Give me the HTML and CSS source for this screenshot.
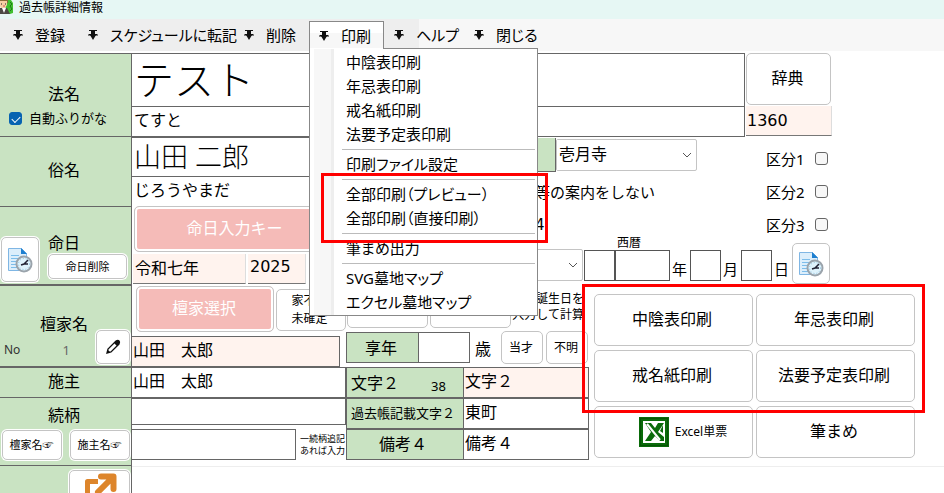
FILE: index.html
```html
<!DOCTYPE html>
<html lang="ja">
<head>
<meta charset="utf-8">
<title>過去帳詳細情報</title>
<link rel="stylesheet" href="styles.css">
</head>
<body>
<svg class="defs" aria-hidden="true">
  <symbol id="chev" viewBox="0 0 10 12"><path d="M1 1h8v1H7v2h2v2H8L5 11 2 6H1V4h2V2H1z" fill="#111"/><path d="M0 6h4M6 6h4" stroke="#111"/><path d="M1 4.500h2M7 4.500h2" stroke="#eee"/></symbol>
  <symbol id="clockdoc" viewBox="0 0 26 26">
    <path d="M1.500 1.500h13l5 5v17h-18z" fill="#dceefb" stroke="#7fb6e4"/>
    <path d="M14 1v6h6z" fill="#1d7fd0"/>
    <path d="M4 8.500h8M4 11.500h7M4 14.500h5M4 17.500h5M4 20.500h6" stroke="#7dbdea"/>
    <circle cx="17" cy="17" r="7.500" fill="#dff3fc" stroke="#9aa3ab" stroke-width="2"/>
    <circle cx="17" cy="17" r="5.500" fill="none" stroke="#8fc0dc" stroke-dasharray="1 2"/>
    <path d="M14 18l3-1 4-4M17 17h4" fill="none" stroke="#223" stroke-width="1.500"/>
  </symbol>
  <symbol id="down" viewBox="0 0 10 6"><path d="M1 1l4 4 4-4" fill="none" stroke="#555" stroke-width="1"/></symbol>
</svg>

<header class="titlebar">
  <svg class="appicon" viewBox="0 0 14 16" aria-hidden="true">
    <path d="M5 0h6l2 3v10l-3 1H6z" fill="#3fbf2f"/><path d="M10 2l2 2-2 2 2 3-2 2" fill="none" stroke="#1c7b1a"/>
    <path d="M0 0h8v3H0z" fill="#8a6a3a"/><path d="M0 1h7v4l-2 3H1L0 6z" fill="#f6cfa4"/>
    <path d="M0 8h7l3 6H0z" fill="#4d4a45"/><path d="M2 8h4l-2 5z" fill="#fff"/><path d="M1 4h1M5 4h1" stroke="#222"/><path d="M3 6h2" stroke="#c55"/>
  </svg>
  <span>過去帳詳細情報</span>
</header>

<nav class="menubar">
  <div class="menus-on">
    <button class="menu"><svg><use href="#chev"/></svg>登録</button>
    <button class="menu"><svg><use href="#chev"/></svg>スケジュールに転記</button>
    <button class="menu"><svg><use href="#chev"/></svg>削除</button>
    <div class="open-menu">
      <button class="menu tab"><svg><use href="#chev"/></svg>印刷</button>
      <div class="dropdown">
        <button>中陰表印刷</button>
        <button>年忌表印刷</button>
        <button>戒名紙印刷</button>
        <button>法要予定表印刷</button>
        <hr>
        <button>印刷ファイル設定</button>
        <hr>
        <button>全部印刷（プレビュー）</button>
        <button>全部印刷（直接印刷）</button>
        <hr>
        <button>筆まめ出力</button>
        <hr>
        <button>SVG墓地マップ</button>
        <button>エクセル墓地マップ</button>
        <div class="mark mark-menu"></div>
      </div>
    </div>
    <button class="menu help"><svg><use href="#chev"/></svg>ヘルプ</button>
  </div>
  <button class="menu close"><svg><use href="#chev"/></svg>閉じる</button>
</nav>

<main class="main">
  <aside class="side">
    <section class="cell c-homyo">
      <label for="homyo">法名</label>
      <label class="auto"><input type="checkbox" checked>自動ふりがな</label>
    </section>
    <section class="cell c-zoku"><label for="zoku">俗名</label></section>
    <section class="cell c-mei">
      <button class="btn icon" aria-label="命日履歴"><svg class="doc"><use href="#clockdoc"/></svg></button>
      <div class="stack"><label for="nen">命日</label><button class="btn small">命日削除</button></div>
    </section>
    <section class="cell c-danka">
      <label for="danka">檀家名</label>
      <div class="no-row"><span>No</span><span class="num">1</span>
        <button class="btn pen" aria-label="編集"><svg viewBox="0 0 16 16"><path d="M2 14l1-4 8-8q2-1 3 0t0 3l-8 8z" fill="#fff" stroke="#111" stroke-width="1.3"/><path d="M9 4l3 3 2-2q1-2 0-3t-3 0zM2 14l1-3 2 2z" fill="#111"/></svg></button>
      </div>
    </section>
    <section class="cell c-sesyu"><label for="sesyu">施主</label></section>
    <section class="cell c-tsuzuki">
      <label for="tsuzuki">続柄</label>
      <div class="pair"><button class="btn small">檀家名☞</button><button class="btn small">施主名☞</button></div>
    </section>
    <section class="cell c-out">
      <button class="btn out" aria-label="外部へ出力"><svg viewBox="0 0 34 34"><path d="M15 8.500H4.500V32H27V20" fill="none" stroke="#dd852b" stroke-width="5" stroke-linejoin="round"/><path d="M18 3.500h12.500V16M30 4L15 19" fill="none" stroke="#dd852b" stroke-width="6" stroke-linejoin="round" stroke-linecap="round"/></svg></button>
    </section>
  </aside>

  <div class="content">
    <div class="sec-a">
      <div class="names">
        <input id="homyo" class="f homyo" value="テスト">
        <input class="f homyo-kana" aria-label="法名ふりがな" value="てすと">
      </div>
      <div class="dict">
        <button class="btn">辞典</button>
        <input class="peach" aria-label="番号" value="1360">
      </div>
    </div>

    <div class="sec-b">
      <div class="person">
        <input id="zoku" class="f zoku" value="山田 二郎">
        <input class="f zoku-kana" aria-label="俗名ふりがな" value="じろうやまだ">
        <button class="btn pink key">命日入力キー</button>
        <div class="era">
          <input id="nen" class="peach nen" value="令和七年"><input class="peach year" aria-label="西暦年" value="2025">
        </div>
      </div>
      <div class="detail">
        <div class="detail-top">
          <div class="temple-col">
            <div class="temple"><span class="tag"></span>
              <span class="pick"><select aria-label="寺院"><option>壱月寺</option></select><svg><use href="#down"/></svg></span></div>
            <span class="line">等の案内をしない</span>
            <span class="line digit">4</span>
          </div>
          <div class="kubun">
            <label>区分1<input type="checkbox"></label>
            <label>区分2<input type="checkbox"></label>
            <label>区分3<input type="checkbox"></label>
          </div>
        </div>
        <div class="birth">
          <span class="pick era-pick"><select aria-label="元号"><option></option></select><svg><use href="#down"/></svg></span>
          <input class="box" aria-label="和暦年">
          <span class="seireki"><label for="sy">西暦</label><input id="sy" class="box wide"></span>
          <label class="u" for="sy">年</label><input id="sm" class="box" aria-label="月">
          <label class="u" for="sm">月</label><input id="sd" class="box" aria-label="日">
          <label class="u" for="sd">日</label>
          <button class="btn icon2" aria-label="履歴"><svg class="doc"><use href="#clockdoc"/></svg></button>
        </div>
      </div>
    </div>

    <div class="sec-c">
      <div class="family">
        <div class="fam-top">
          <button class="btn pink pick-danka">檀家選択</button>
          <button class="btn unk">家不明<br>未確定</button>
          <button class="btn blank" aria-label="和暦計算"></button>
          <button class="btn blank" aria-label="西暦計算"></button>
          <span class="note">誕生日を<br>入力して計算</span>
        </div>
        <div class="fam-cols">
          <div class="fam-left">
            <input id="danka" class="g danka" value="山田　太郎">
            <input id="sesyu" class="g sesyu" value="山田　太郎">
            <input id="tsuzuki" class="g tsuzuki">
            <div class="add"><input id="add" class="g"><label for="add">一続柄追記<br>あれば入力</label></div>
          </div>
          <div class="fam-mid">
            <div class="age">
              <label class="lab" for="age">享年</label><input id="age" class="g"><span class="sai">歳</span>
              <button class="btn">当才</button><button class="btn">不明</button>
            </div>
            <div class="row"><label class="lab l1" for="m2">文字２<span>38</span></label><input id="m2" class="g p" value="文字２"></div>
            <div class="row"><label class="lab l2" for="kk">過去帳記載文字２</label><input id="kk" class="g" value="東町"></div>
            <div class="row"><label class="lab l3" for="b4">備考４</label><input id="b4" class="g" value="備考４"></div>
          </div>
        </div>
      </div>
      <div class="prints">
        <button class="btn">中陰表印刷</button><button class="btn">年忌表印刷</button>
        <button class="btn">戒名紙印刷</button><button class="btn">法要予定表印刷</button>
        <button class="btn excel"><svg viewBox="0 0 30 30"><path d="M0 0h30v30H0z" fill="#0a6b0a"/><path d="M1.500 1.500h27v27h-27z" fill="none" stroke="#053f05" stroke-dasharray="1 1"/><path d="M4 4h22v22H4z" fill="#fff"/><path d="M6 6h6l4 5 3-5h6l-6 9 6 5v4h-4l-5-5-4 5H6l6-9z" fill="#0a6b0a"/><path d="M8 7l13 16" stroke="#fff" stroke-width="2"/><path d="M24 8v8l-3-2z" fill="#0a6b0a"/></svg>Excel単票</button>
        <button class="btn">筆まめ</button>
        <div class="mark mark-prints"></div>
      </div>
    </div>
    <div class="foot"></div>
  </div>
</main>
</body>
</html>
```
FILE: styles.css
```css
* { box-sizing: border-box; }
html, body { height: 100%; }
body {
  margin: 0;
  overflow: hidden;
  display: flex;
  flex-direction: column;
  background: #fff;
  color: #000;
  font: 16px/20px "Noto Sans", "Noto Sans CJK JP", sans-serif;
}
button, input, select { font: inherit; color: inherit; margin: 0; border-radius: 0; }
button { background: none; border: 0; padding: 0; white-space: nowrap; }
input, select { border: 0; background: #fff; padding: 0 2px; min-width: 0; outline: 0; }
input[type="checkbox"] {
  appearance: none;
  width: 13px;
  height: 13px;
  padding: 0;
  border: 1px solid #666;
  border-radius: 3px;
  background: #f7f7f7;
}
.defs { position: absolute; width: 0; height: 0; }

.titlebar {
  flex: none;
  height: 19px;
  display: flex;
  gap: 5px;
  background: #e6f7f4;
  font-size: 12px;
  line-height: 15px;
}
.appicon { width: 14px; height: 16px; }

.menubar {
  flex: none;
  height: 32px;
  display: flex;
  background: #f7f7f7;
  font-size: 15px;
  font-feature-settings: "palt";
}
.menus-on { display: flex; background: #eee; width: 419px; padding-left: 13px; white-space: nowrap; }
.menu { display: flex; align-items: center; gap: 12px; width: 75px; flex: none; }
.menu:nth-child(2) { width: 156px; }
.menu svg { width: 10px; height: 12px; flex: none; }
.menus-on .help { width: 80px; }
.close { margin-left: 55px; }
.open-menu { position: relative; z-index: 5; width: 75px; margin-left: -10px; margin-right: 10px; padding-top: 2px; }
.tab {
  height: 28px;
  padding: 0 0 0 9px;
  border: 1px solid #888;
  border-bottom: 0;
  background: linear-gradient(#fff 40%, #f7f7f7 40%);
}
.dropdown {
  position: absolute;
  top: 29px;
  left: 0;
  width: 229px;
  padding: 1px 2px 1px 4px;
  border: 1px solid #888;
  background: linear-gradient(90deg, #fff 4px, #f7f7f7 4px 21px, #eee 21px 24px, #fff 24px);
}
.dropdown::before {
  content: "";
  position: absolute;
  top: -1px;
  left: 0;
  width: 73px;
  height: 1px;
  background: #fff;
}
.dropdown button { display: block; width: 100%; height: 24px; padding-left: 32px; text-align: left; line-height: 24px; }
.dropdown hr { margin: 3px 0 2px 28px; border: 0; height: 1px; background: #bbb; }
.mark { position: absolute; border: 3px solid #f00; pointer-events: none; }
.mark-menu { left: 11px; right: -11px; top: 124px; height: 70px; }

.main { flex: 1; display: flex; margin-top: 2px; min-height: 0; }
.side { flex: none; width: 132px; display: flex; flex-direction: column; background: #c9e3c2; border-right: 1px solid #666; }
.cell { flex: none; display: flex; flex-direction: column; align-items: center; border-top: 1px solid #666; padding-right: 3px; }
.c-homyo { height: 83px; padding-top: 30px; gap: 5px; }
.auto { align-self: flex-start; display: flex; align-items: center; gap: 7px; padding-left: 9px; font-size: 13px; line-height: 18px; white-space: nowrap; }
.auto input[type="checkbox"] {
  border-color: #0763b1;
  background: #0763b1;
  display: grid;
  place-items: center;
}
.auto input::before { content: ""; width: 7px; height: 4px; border: solid #fff; border-width: 0 0 1px 1px; rotate: -45deg; }
.c-zoku { height: 70px; padding-top: 23px; }
.c-mei { height: 78px; flex-direction: row; align-items: flex-end; gap: 9px; padding-bottom: 2px; }
.c-danka { height: 82px; border-top-width: 2px; padding-top: 28px; }
.c-sesyu { height: 31px; border-top-width: 2px; padding-top: 3px; }
.c-tsuzuki { height: 68px; padding: 7px 0 0; gap: 5px; }
.c-tsuzuki > label { padding-right: 3px; }
.c-out { flex: 1; align-items: flex-end; padding: 4px 1px 0 0; }

.btn { background: #fff; border: 1px solid #c4c4c4; border-radius: 5px; }
.side .btn { box-shadow: 0 0 0 1px #fff; }
.doc { width: 26px; height: 26px; display: block; margin: auto; }
.icon { width: 38px; height: 45px; margin-left: 1px; flex: none; }
.stack { display: flex; flex-direction: column; flex: 1; padding-bottom: 3px; }
.side .small { font-size: 11px; }
.stack .small { height: 25px; width: 79px; margin-top: 1px; }
.no-row { align-self: stretch; display: flex; align-items: center; padding-left: 4px; font-size: 12px; color: #333; }
.no-row .num { margin-left: 42px; font-size: 13px; color: #666; }
.pen { width: 34px; height: 34px; margin-left: auto; margin-right: -2px; margin-top: -4px; }
.pen svg { width: 16px; height: 16px; display: block; margin: auto; }
.no-row span { padding-top: 2px; }
.pair { display: flex; gap: 8px; }
.pair .btn { width: 60px; height: 30px; }
.out { width: 61px; height: 40px; }
.out svg { width: 34px; height: 34px; display: block; margin: 2px auto; }

.content { flex: 1; min-width: 0; display: flex; flex-direction: column; }
.sec-a { display: flex; height: 83px; }
.names { width: 613px; display: flex; flex-direction: column; }
.f { border-top: 1px solid #666; }
.names .f { border-right: 1px solid #666; }
.homyo { height: 53px; font-size: 40px; font-weight: 300; padding-bottom: 4px; }
.homyo-kana { flex: 1; padding-bottom: 4px; }
.dict { width: 87px; display: flex; flex-direction: column; padding-left: 1px; gap: 1px; }
.dict .btn { height: 53px; margin-right: 1px; padding-bottom: 2px; padding-right: 2px; }
.peach { background: #fff3ee; border-right: 1px solid #ddd; border-bottom: 1px solid #777; }
.dict .peach { height: 30px; padding-left: 1px; font-family: "DejaVu Sans", sans-serif; }

.sec-b { display: flex; height: 149px; }
.person { width: 400px; display: flex; flex-direction: column; align-items: flex-start; }
.person .f { width: 100%; }
.zoku { height: 40px; font-size: 27px; font-weight: 300; border-top-width: 2px; padding-bottom: 4px; }
.zoku-kana { height: 30px; padding-bottom: 6px; }
.pink { background: #f5bbb8; color: #fff; box-shadow: inset 0 0 0 2px #fff; }
.key { width: 203px; height: 46px; margin-left: 2px; padding-right: 2px; padding-bottom: 2px; }
.era { display: flex; gap: 2px; padding: 2px 0 0 1px; }
.era .peach { height: 30px; padding-bottom: 4px; }
.nen { width: 113px; }
.year { width: 58px; font-family: "DejaVu Sans", sans-serif; }
.detail { flex: 1; display: flex; flex-direction: column; }
.detail-top { display: flex; height: 106px; }
.temple-col { width: 234px; display: flex; flex-direction: column; }
.temple { display: flex; height: 36px; margin-bottom: 4px; align-items: center; border-top: 1px solid #666; margin-right: 21px; }
.tag { width: 24px; height: 34px; background: #c9e3c2; border-right: 1px solid #666; border-bottom: 1px solid #666; }
.pick { display: flex; align-items: center; width: 141px; height: 32px; border: 1px solid #c4c4c4; border-radius: 2px; padding-right: 4px; }
.pick select { flex: 1; appearance: none; align-self: stretch; padding-bottom: 2px; }
.pick svg { width: 10px; height: 6px; flex: none; }
.line { height: 33px; line-height: 32px; font-size: 15px; padding-left: 3px; white-space: nowrap; }
.digit { font-family: "DejaVu Sans", sans-serif; }
.kubun { padding-top: 6px; font-size: 15px; }
.kubun label { display: flex; align-items: center; height: 33px; width: 62px; justify-content: space-between; }
.birth { display: flex; align-items: flex-end; height: 39px; }
.era-pick { width: 51px; margin-right: 1px; }
.box { width: 31px; height: 31px; border: 1px solid #555; }
.wide { width: 55px; }
.seireki { display: flex; flex-direction: column; font-size: 12px; line-height: 14px; }
.seireki label { padding-left: 2px; }
.u { width: 20px; text-align: center; line-height: 24px; font-size: 15px; padding-right: 1px; }
.icon2 { width: 38px; height: 41px; margin-bottom: -3px; }

.sec-c { display: flex; gap: 5px; }
.family { width: 457px; }
.fam-top { display: flex; height: 47px; padding-left: 4px; }
.pick-danka { width: 138px; height: 46px; margin: 1px 2px 0 0; padding-right: 2px; padding-bottom: 2px; }
.unk { width: 70px; height: 42px; margin: 4px 1px 0 0; padding-right: 3px; font-size: 12px; line-height: 18px; }
.blank { width: 81px; height: 39px; margin: 4px 2px 0 0; }
.note { font-size: 12px; line-height: 16px; padding-top: 6px; margin-left: -1px; text-align: right; white-space: nowrap; width: 72px; }
.fam-cols { display: flex; }
.fam-left { width: 214px; padding-top: 4px; display: flex; flex-direction: column; }
.g { border: 1px solid #666; padding-left: 1px; }
.fam-left .g { border-left: 0; }
.danka { height: 31px; width: 208px; background: #fff3ee; padding-bottom: 6px; }
.sesyu { height: 31px; padding-bottom: 6px; }
.tsuzuki { height: 27px; }
.add { display: flex; gap: 4px; margin-top: 4px; align-items: center; font-size: 9px; line-height: 12px; white-space: nowrap; }
.add .g { width: 164px; height: 31px; }
.fam-mid { flex: none; width: 243px; }
.lab { flex: none; display: flex; align-items: center; justify-content: center; width: 117px; background: #c9e3c2; border: 1px solid #666; border-right: 0; white-space: nowrap; }
.age { display: flex; height: 31px; margin-bottom: 4px; }
.age .lab { width: 72px; padding-right: 3px; }
.age .g { width: 52px; }
.sai { width: 31px; padding-left: 5px; padding-top: 7px; }
.age .btn { width: 42px; height: 33px; margin: -1px 3px 0 0; padding-right: 2px; font-size: 12px; flex: none; }
.age .btn:last-child { margin-right: -3px; }
.row { display: flex; height: 31px; }
.row .g { flex: 1; padding-bottom: 4px; }
.row .p { background: #fff3ee; }
.l1 { justify-content: flex-start; gap: 32px; padding-left: 4px; }
.l1 span { font-size: 13px; padding-top: 6px; }
.l2 { font-size: 13px; padding-right: 4px; padding-bottom: 2px; }
.l3 { padding-right: 4px; padding-bottom: 2px; }

.prints { position: relative; display: grid; grid-template-columns: 159px 159px; grid-auto-rows: 52px; gap: 4px 3px; padding-top: 9px; }
.prints .btn { padding-right: 3px; padding-bottom: 2px; }
.prints .excel { display: flex; align-items: center; justify-content: center; gap: 6px; font-size: 12px; padding-left: 22px; padding-bottom: 0; }
.excel svg { width: 30px; height: 30px; }
.mark-prints { left: -12px; right: -10px; top: -1px; height: 129px; }
.foot { margin-top: 6px; border-top: 1px solid #eee; }
```
